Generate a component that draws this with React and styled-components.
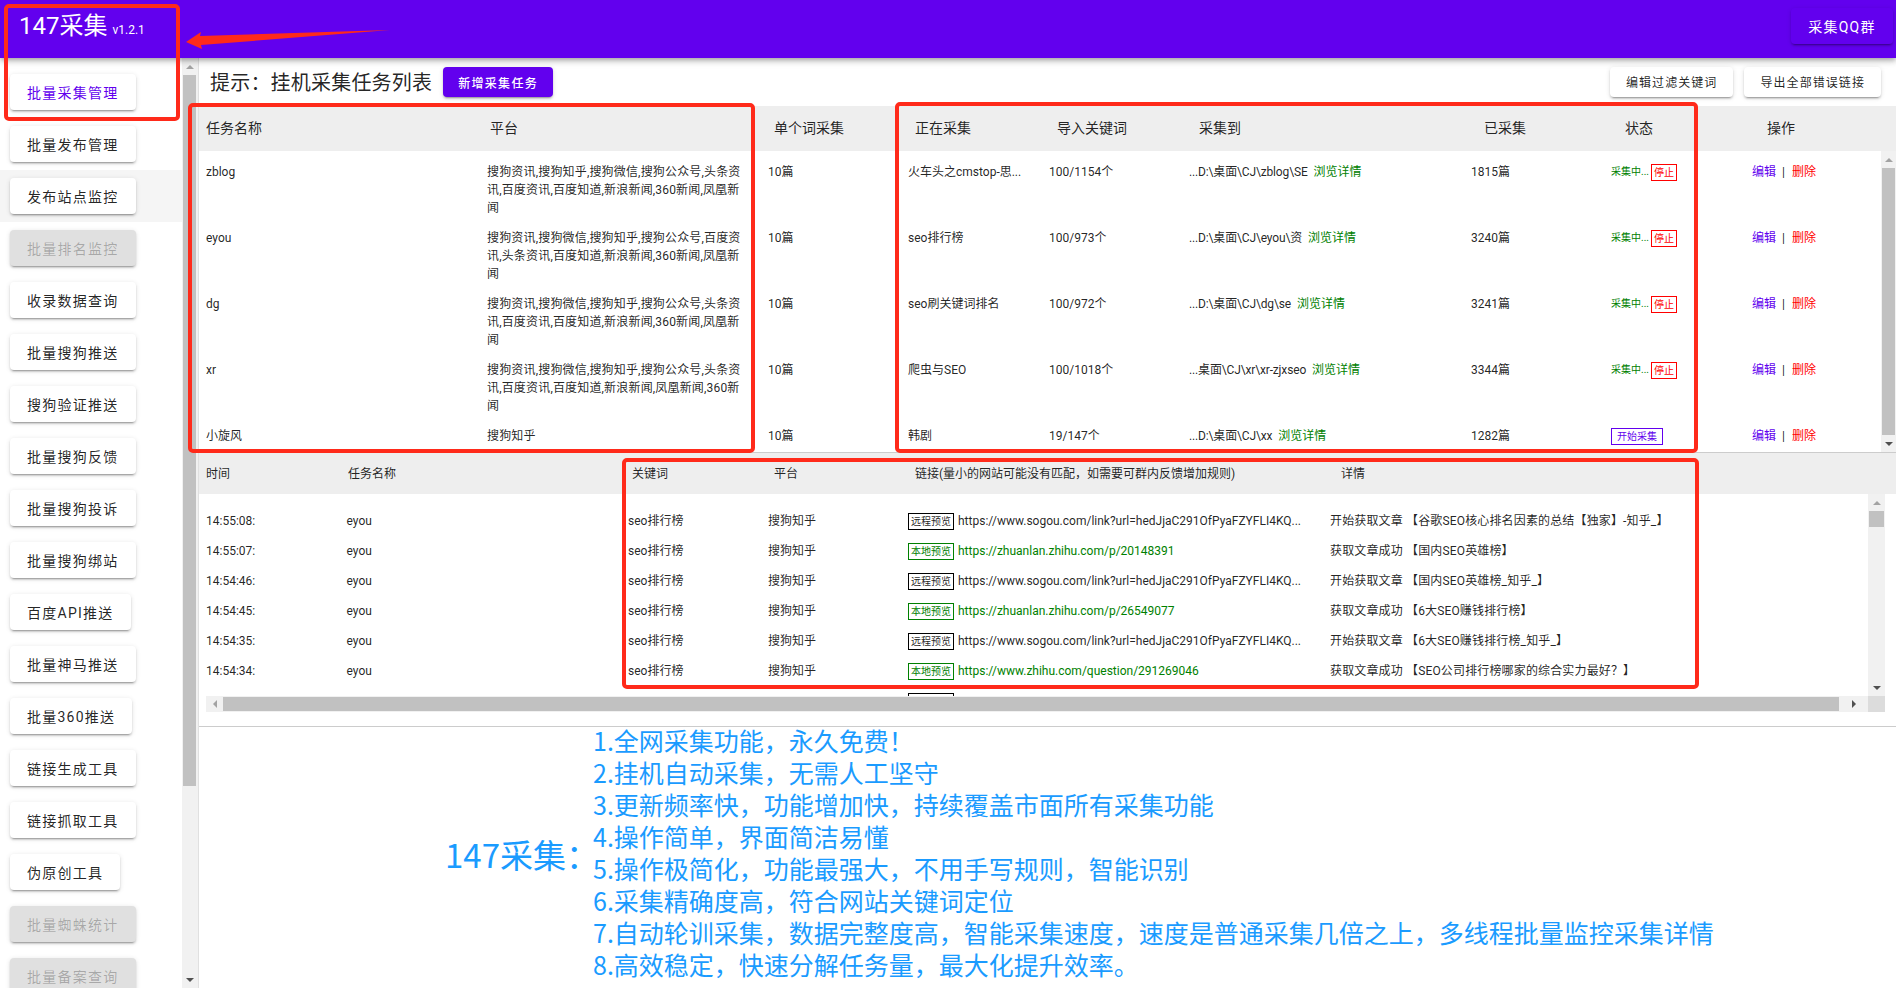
import React from 'react';
import styled, { createGlobalStyle } from 'styled-components';

const navItems = [
  { label: '批量采集管理', active: true },
  { label: '批量发布管理' },
  { label: '发布站点监控', hovered: true },
  { label: '批量排名监控', disabled: true },
  { label: '收录数据查询' },
  { label: '批量搜狗推送' },
  { label: '搜狗验证推送' },
  { label: '批量搜狗反馈' },
  { label: '批量搜狗投诉' },
  { label: '批量搜狗绑站' },
  { label: '百度API推送' },
  { label: '批量神马推送' },
  { label: '批量360推送' },
  { label: '链接生成工具' },
  { label: '链接抓取工具' },
  { label: '伪原创工具' },
  { label: '批量蜘蛛统计', disabled: true },
  { label: '批量备案查询', disabled: true },
];

const tasks = [
  {
    name: 'zblog',
    platform: '搜狗资讯,搜狗知乎,搜狗微信,搜狗公众号,头条资讯,百度资讯,百度知道,新浪新闻,360新闻,凤凰新闻',
    current: '火车头之cmstop-思...',
    keywords: '100/1154个',
    path: '...D:\\桌面\\CJ\\zblog\\SE',
    done: '1815篇',
    running: true,
  },
  {
    name: 'eyou',
    platform: '搜狗资讯,搜狗微信,搜狗知乎,搜狗公众号,百度资讯,头条资讯,百度知道,新浪新闻,360新闻,凤凰新闻',
    current: 'seo排行榜',
    keywords: '100/973个',
    path: '...D:\\桌面\\CJ\\eyou\\资',
    done: '3240篇',
    running: true,
  },
  {
    name: 'dg',
    platform: '搜狗资讯,搜狗微信,搜狗知乎,搜狗公众号,头条资讯,百度资讯,百度知道,新浪新闻,360新闻,凤凰新闻',
    current: 'seo刷关键词排名',
    keywords: '100/972个',
    path: '...D:\\桌面\\CJ\\dg\\se',
    done: '3241篇',
    running: true,
  },
  {
    name: 'xr',
    platform: '搜狗资讯,搜狗微信,搜狗知乎,搜狗公众号,头条资讯,百度资讯,百度知道,新浪新闻,凤凰新闻,360新闻',
    current: '爬虫与SEO',
    keywords: '100/1018个',
    path: '...桌面\\CJ\\xr\\xr-zjxseo',
    done: '3344篇',
    running: true,
  },
  {
    name: '小旋风',
    platform: '搜狗知乎',
    current: '韩剧',
    keywords: '19/147个',
    path: '...D:\\桌面\\CJ\\xx',
    done: '1282篇',
    running: false,
  },
];

const sogouUrl = 'https://www.sogou.com/link?url=hedJjaC291OfPyaFZYFLI4KQ...';

const logs = [
  { time: '14:55:08:', url: sogouUrl, detail: '开始获取文章 【谷歌SEO核心排名因素的总结【独家】-知乎_】' },
  { time: '14:55:07:', url: 'https://zhuanlan.zhihu.com/p/20148391', local: true, detail: '获取文章成功 【国内SEO英雄榜】' },
  { time: '14:54:46:', url: sogouUrl, detail: '开始获取文章 【国内SEO英雄榜_知乎_】' },
  { time: '14:54:45:', url: 'https://zhuanlan.zhihu.com/p/26549077', local: true, detail: '获取文章成功 【6大SEO赚钱排行榜】' },
  { time: '14:54:35:', url: sogouUrl, detail: '开始获取文章 【6大SEO赚钱排行榜_知乎_】' },
  { time: '14:54:34:', url: 'https://www.zhihu.com/question/291269046', local: true, detail: '获取文章成功 【SEO公司排行榜哪家的综合实力最好？】' },
];

const features = [
  '1.全网采集功能，永久免费！',
  '2.挂机自动采集，无需人工坚守',
  '3.更新频率快，功能增加快，持续覆盖市面所有采集功能',
  '4.操作简单，界面简洁易懂',
  '5.操作极简化，功能最强大，不用手写规则，智能识别',
  '6.采集精确度高，符合网站关键词定位',
  '7.自动轮训采集，数据完整度高，智能采集速度，速度是普通采集几倍之上，多线程批量监控采集详情',
  '8.高效稳定，快速分解任务量，最大化提升效率。',
];

const taskColumns = ['任务名称', '平台', '单个词采集', '正在采集', '导入关键词', '采集到', '已采集', '状态', '操作'];
const logColumns = ['时间', '任务名称', '关键词', '平台', '链接(量小的网站可能没有匹配，如需要可群内反馈增加规则)', '详情'];

const GlobalStyle = createGlobalStyle`
  html, body {
    margin: 0;
    height: 100%;
    overflow: hidden;
  }
  body {
    font-family: Roboto, "Noto Sans CJK SC", sans-serif;
    color: rgba(0, 0, 0, 0.87);
    background: #fff;
  }
`;

const Page = styled.div`
  position: relative;
  width: 1896px;
  height: 988px;
  overflow: hidden;
  display: flex;
  flex-direction: column;
`;

const Header = styled.header`
  height: 58px;
  flex: none;
  background: #6200ee;
  color: #fff;
  display: flex;
  align-items: flex-start;
  justify-content: space-between;
  padding: 0 3px 0 19px;
  box-shadow: 0 2px 4px -1px rgba(0, 0, 0, 0.2), 0 4px 5px rgba(0, 0, 0, 0.14), 0 1px 10px rgba(0, 0, 0, 0.12);
  position: relative;
  z-index: 2;
`;

const Title = styled.div`
  font-size: 24px;
  line-height: 32px;
  margin-top: 10px;
`;

const Version = styled.span`
  font-size: 12px;
  margin-left: 5px;
`;

const QqButton = styled.button`
  margin-top: 8px;
  width: 102px;
  height: 36px;
  border: 0;
  border-radius: 4px;
  background: #6200ee;
  color: #fff;
  font: inherit;
  font-size: 14px;
  letter-spacing: 1.25px;
  padding: 0;
  box-shadow: 0 3px 1px -2px rgba(0, 0, 0, 0.2), 0 2px 2px rgba(0, 0, 0, 0.14), 0 1px 5px rgba(0, 0, 0, 0.12);
`;

const Body = styled.div`
  flex: 1;
  min-height: 0;
  display: flex;
`;

const Sidebar = styled.aside`
  width: 198px;
  flex: none;
  display: flex;
  border-right: 1px solid #e0e0e0;
  overflow: hidden;
`;

const NavList = styled.nav`
  width: 182px;
  flex: none;
  padding-top: 8px;
  display: flex;
  flex-direction: column;
  align-items: flex-start;
`;

const NavRow = styled.div`
  width: 100%;
  height: 52px;
  flex: none;
  padding: 0 10px;
  box-sizing: border-box;
  display: flex;
  align-items: center;
  background: ${(p) => (p.$hovered ? '#f5f5f5' : 'transparent')};
`;

const elevated = `
  border: 0;
  border-radius: 4px;
  font-family: inherit;
  white-space: nowrap;
  box-shadow: 0 3px 1px -2px rgba(0, 0, 0, 0.2), 0 2px 2px rgba(0, 0, 0, 0.14), 0 1px 5px rgba(0, 0, 0, 0.12);
`;

const NavButton = styled.button`
  ${elevated}
  height: 36px;
  padding: 0 17px;
  font-size: 14px;
  letter-spacing: 1.25px;
  background: ${(p) => (p.disabled ? '#e0e0e0' : '#fff')};
  color: ${(p) => (p.disabled ? 'rgba(0, 0, 0, 0.26)' : p.$active ? '#6200ee' : 'rgba(0, 0, 0, 0.87)')};
`;

const VScroll = styled.div`
  width: ${(p) => p.$width || 15}px;
  flex: none;
  background: #f1f1f1;
  display: flex;
  flex-direction: column;
  align-items: center;
  justify-content: space-between;
  box-sizing: border-box;
`;

const Track = styled.div`
  flex: 1;
  width: 100%;
  min-height: 0;
  padding: 0 ${(p) => p.$right || 1}px ${(p) => p.$after}px 1px;
  box-sizing: border-box;
  display: flex;
`;

const Thumb = styled.div`
  flex: 1;
  background: #c1c1c1;
`;

const ArrowBox = styled.div`
  height: 17px;
  width: 100%;
  flex: none;
  display: flex;
  align-items: center;
  justify-content: center;
`;

const ArrowGlyph = styled.svg`
  display: block;
`;

const Arrow = ({ dir, color = '#505050' }) => {
  const points = {
    up: '0,6 4,2 8,6',
    down: '0,2 8,2 4,6',
    left: '6,0 6,8 2,4',
    right: '2,0 6,4 2,8',
  };
  return (
    <ArrowBox>
      <ArrowGlyph width="8" height="8" viewBox="0 0 8 8">
        <polygon points={points[dir]} fill={color} />
      </ArrowGlyph>
    </ArrowBox>
  );
};

const Main = styled.main`
  flex: 1;
  min-width: 0;
  display: flex;
  flex-direction: column;
`;

const Toolbar = styled.div`
  height: 48px;
  flex: none;
  box-sizing: border-box;
  padding: 9px 15px 0 11px;
  display: flex;
  align-items: flex-start;
  gap: 11px;
`;

const Heading = styled.h2`
  margin: 1px 0 0;
  font-size: 20px;
  font-weight: 400;
  letter-spacing: 0.2px;
  line-height: 30px;
  white-space: nowrap;
`;

const SmallButton = styled.button`
  ${elevated}
  height: 30px;
  padding: 0 ${(p) => (p.$primary ? 15 : 16)}px ${(p) => (p.$primary ? 0 : 2)}px;
  font-size: 12px;
  letter-spacing: ${(p) => (p.$primary ? 1.3 : 1.07)}px;
  background: ${(p) => (p.$primary ? '#6200ee' : '#fff')};
  color: ${(p) => (p.$primary ? '#fff' : 'rgba(0, 0, 0, 0.87)')};
  font-weight: ${(p) => (p.$primary ? 500 : 400)};
  margin-left: ${(p) => (p.$push ? 'auto' : 0)};
`;

const HeadRow = styled.div`
  display: grid;
  grid-template-columns: ${(p) => p.$columns};
  height: ${(p) => p.$height}px;
  box-sizing: border-box;
  flex: none;
  align-items: center;
  padding: 0 0 ${(p) => p.$lift}px 7px;
  background: #eee;
  font-size: ${(p) => p.$size}px;
  color: rgba(0, 0, 0, 0.87);
  overflow: hidden;
  white-space: nowrap;
`;

const TaskSection = styled.section`
  height: 301px;
  flex: none;
  display: flex;
  border-bottom: 1px solid #ccc;
`;

const TaskRows = styled.div`
  flex: 1;
  min-width: 0;
  overflow: hidden;
  padding-top: 12px;
`;

const TaskRow = styled.div`
  display: grid;
  grid-template-columns: 281px 281px 140px 141px 140px 282px 140px 140px 1fr;
  min-height: 66px;
  padding-left: 7px;
  font-size: 12px;
  line-height: 18px;
  align-items: start;
`;

const Cell = styled.div`
  min-width: 0;
`;

const PlatformCell = styled.div`
  min-width: 0;
  padding-right: 26px;
  letter-spacing: 0.17px;
`;

const PathText = styled.span`
  letter-spacing: -0.15px;
`;

const GreenLink = styled.span`
  color: green;
  margin-left: 6px;
`;

const Status = styled.div`
  display: flex;
  align-items: flex-start;
  font-size: 10px;
  color: green;
`;

const StatusText = styled.span`
  width: 40px;
  flex: none;
  white-space: nowrap;
`;

const StopBox = styled.span`
  box-sizing: border-box;
  width: 26px;
  height: 17px;
  margin-top: 1px;
  border: 1px solid red;
  color: red;
  line-height: 15px;
  text-align: center;
  flex: none;
`;

const StartBox = styled.span`
  box-sizing: border-box;
  width: 52px;
  height: 17px;
  margin-top: 1px;
  border: 1px solid #6200ee;
  color: #6200ee;
  line-height: 15px;
  text-align: center;
  font-size: 10px;
`;

const EditLink = styled.span`
  color: #6200ee;
  margin-left: 1px;
`;

const DeleteLink = styled.span`
  color: red;
`;

const Sep = styled.span`
  margin: 0 7px 0 6px;
`;

const LogSection = styled.section`
  height: 273px;
  flex: none;
  display: flex;
  flex-direction: column;
  border-bottom: 1px solid #ccc;
`;

const LogMiddle = styled.div`
  height: 202px;
  flex: none;
  display: flex;
  padding-right: 11px;
`;

const LogRows = styled.div`
  flex: 1;
  min-width: 0;
  overflow: hidden;
  padding-top: 12px;
`;

const LogRow = styled.div`
  display: grid;
  grid-template-columns: 140.5px 281.5px 140px 140px 422px 1fr;
  height: 30px;
  padding-left: 7px;
  font-size: 12px;
  line-height: 30px;
  white-space: nowrap;
`;

const UrlCell = styled.div`
  display: flex;
  align-items: center;
  min-width: 0;
  color: ${(p) => (p.$local ? 'green' : 'rgba(0, 0, 0, 0.87)')};
`;

const DetailCell = styled.div`
  letter-spacing: 0.15px;
`;

const Chip = styled.span`
  box-sizing: border-box;
  width: 46px;
  height: 17px;
  margin-right: 4px;
  flex: none;
  border: 1px solid ${(p) => (p.$local ? 'green' : '#000')};
  color: ${(p) => (p.$local ? 'green' : 'rgba(0, 0, 0, 0.87)')};
  font-size: 10px;
  line-height: 15px;
  text-align: center;
`;

const HScrollWrap = styled.div`
  height: 16px;
  flex: none;
  margin: 0 11px 0 7px;
  background: #f1f1f1;
  display: flex;
  align-items: stretch;
`;

const HSide = styled.div`
  width: ${(p) => p.$width}px;
  flex: none;
  display: flex;
  align-items: center;
  background: ${(p) => p.$bg || 'transparent'};
`;

const HThumb = styled.div`
  width: 1616px;
  flex: none;
  margin: 1px 0;
  background: #c1c1c1;
`;

const Promo = styled.section`
  flex: 1;
  min-height: 0;
  display: flex;
  align-items: center;
  padding-left: 246px;
  color: #1a9bff;
  font-family: "Noto Sans CJK SC", sans-serif;
  white-space: nowrap;
`;

const PromoLabel = styled.div`
  width: 148px;
  flex: none;
  font-size: 33px;
  line-height: 44px;
  margin-top: -7px;
  font-feature-settings: "palt";
`;

const PromoList = styled.ol`
  list-style: none;
  margin: -11px 0 0;
  padding: 0;
  font-size: 25px;
  line-height: 32px;
`;

const Annotation = styled.div`
  position: absolute;
  left: ${(p) => p.$x}px;
  top: ${(p) => p.$y}px;
  width: ${(p) => p.$w}px;
  height: ${(p) => p.$h}px;
  box-sizing: border-box;
  border: 4px solid #ff2a1a;
  border-radius: 5px;
  z-index: 5;
  pointer-events: none;
`;

const ArrowMark = styled.svg`
  position: absolute;
  left: 180px;
  top: 24px;
  z-index: 5;
`;

const App = () => (
  <Page>
    <GlobalStyle />
    <Header>
      <Title>
        147采集<Version>v1.2.1</Version>
      </Title>
      <QqButton>采集QQ群</QqButton>
    </Header>
    <Body>
      <Sidebar>
        <NavList>
          {navItems.map((item) => (
            <NavRow key={item.label} $hovered={item.hovered}>
              <NavButton $active={item.active} disabled={item.disabled}>
                {item.label}
              </NavButton>
            </NavRow>
          ))}
        </NavList>
        <VScroll $width={16}>
          <Arrow dir="up" color="#a3a3a3" />
          <Track $after={185} $right={2}>
            <Thumb />
          </Track>
          <Arrow dir="down" />
        </VScroll>
      </Sidebar>
      <Main>
        <Toolbar>
          <Heading>提示：挂机采集任务列表</Heading>
          <SmallButton $primary>新增采集任务</SmallButton>
          <SmallButton $push>编辑过滤关键词</SmallButton>
          <SmallButton>导出全部错误链接</SmallButton>
        </Toolbar>
        <HeadRow $columns="284px 284px 141px 142px 142px 285px 141px 142px 1fr" $height={45} $size={14} $lift={4}>
          {taskColumns.map((col) => (
            <div key={col}>{col}</div>
          ))}
        </HeadRow>
        <TaskSection>
          <TaskRows>
            {tasks.map((task) => (
              <TaskRow key={task.name}>
                <Cell>{task.name}</Cell>
                <PlatformCell>{task.platform}</PlatformCell>
                <Cell>10篇</Cell>
                <Cell>{task.current}</Cell>
                <Cell>{task.keywords}</Cell>
                <Cell>
                  <PathText>{task.path}</PathText>
                  <GreenLink>浏览详情</GreenLink>
                </Cell>
                <Cell>{task.done}</Cell>
                <Cell>
                  {task.running ? (
                    <Status>
                      <StatusText>采集中...</StatusText>
                      <StopBox>停止</StopBox>
                    </Status>
                  ) : (
                    <Status>
                      <StartBox>开始采集</StartBox>
                    </Status>
                  )}
                </Cell>
                <Cell>
                  <EditLink>编辑</EditLink>
                  <Sep>|</Sep>
                  <DeleteLink>删除</DeleteLink>
                </Cell>
              </TaskRow>
            ))}
          </TaskRows>
          <VScroll>
            <Arrow dir="up" color="#a3a3a3" />
            <Track $after={0}>
              <Thumb />
            </Track>
            <Arrow dir="down" />
          </VScroll>
        </TaskSection>
        <LogSection>
          <HeadRow $columns="142px 284px 142px 141px 426px 1fr" $height={41} $size={12} $lift={2}>
            {logColumns.map((col, i) => (
              <div key={i}>{col}</div>
            ))}
          </HeadRow>
          <LogMiddle>
            <LogRows>
              {logs.map((log) => (
                <LogRow key={log.time}>
                  <div>{log.time}</div>
                  <div>eyou</div>
                  <div>seo排行榜</div>
                  <div>搜狗知乎</div>
                  <UrlCell $local={log.local}>
                    <Chip $local={log.local}>{log.local ? '本地预览' : '远程预览'}</Chip>
                    {log.url}
                  </UrlCell>
                  <DetailCell>{log.detail}</DetailCell>
                </LogRow>
              ))}
              <LogRow>
                <div />
                <div />
                <div />
                <div />
                <UrlCell>
                  <Chip />
                </UrlCell>
              </LogRow>
            </LogRows>
            <VScroll $width={17}>
              <Arrow dir="up" color="#a3a3a3" />
              <Track $after={152}>
                <Thumb />
              </Track>
              <Arrow dir="down" />
            </VScroll>
          </LogMiddle>
          <HScrollWrap>
            <HSide $width={17}>
              <Arrow dir="left" color="#a3a3a3" />
            </HSide>
            <HThumb />
            <HSide $width={29}>
              <Arrow dir="right" />
            </HSide>
            <HSide $width={17} $bg="#dcdcdc" />
          </HScrollWrap>
        </LogSection>
        <Promo>
          <PromoLabel>147采集：</PromoLabel>
          <PromoList>
            {features.map((line) => (
              <li key={line}>{line}</li>
            ))}
          </PromoList>
        </Promo>
      </Main>
    </Body>
    <Annotation $x={4} $y={4} $w={176} $h={117} />
    <Annotation $x={188} $y={103} $w={567} $h={350} />
    <Annotation $x={895} $y={102} $w={803} $h={351} />
    <Annotation $x={622} $y={458} $w={1077} $h={231} />
    <ArrowMark width="212" height="30" viewBox="0 0 212 30">
      <polygon points="6,18 21,8 20,12 210,6 21,21 22,25" fill="#ff2a1a" />
    </ArrowMark>
  </Page>
);

export default App;
